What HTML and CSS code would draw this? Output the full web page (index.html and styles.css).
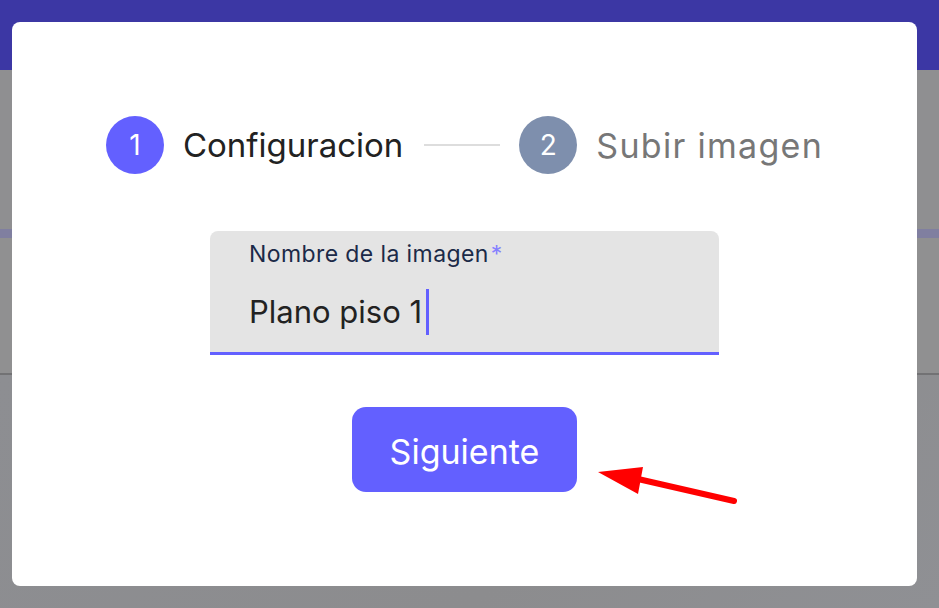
FILE: index.html
```html
<!DOCTYPE html>
<html lang="es">
<head>
<meta charset="utf-8">
<title>Subir imagen</title>
<link rel="stylesheet" href="styles.css">
</head>
<body>
<div class="page">
  <header class="topbar"></header>
  <div class="band band-a"></div>
  <div class="band band-stripe"></div>
  <div class="band band-b"></div>
  <div class="band band-line"></div>
  <div class="band band-c"></div>
</div>

<div class="modal">
  <div class="stepper">
    <div class="step active">
      <span class="circle">1</span>
      <span class="step-label">Configuracion</span>
    </div>
    <span class="connector"></span>
    <div class="step">
      <span class="circle">2</span>
      <span class="step-label">Subir imagen</span>
    </div>
  </div>

  <div class="field">
    <label class="field-label">Nombre de la imagen<span class="req">*</span></label>
    <div class="field-value">Plano piso 1<span class="caret"></span></div>
  </div>

  <button class="btn">Siguiente</button>

  <svg class="arrow" width="150" height="50" viewBox="0 0 150 50">
    <line x1="136" y1="40" x2="40" y2="18" stroke="#ff0000" stroke-width="6" stroke-linecap="round"/>
    <polygon points="0,11 45,6 40,33" fill="#ff0000"/>
  </svg>
</div>
</body>
</html>
```

FILE: styles.css
```css
* { box-sizing: border-box; }
html, body { margin: 0; padding: 0; }
body {
  width: 939px;
  height: 608px;
  overflow: hidden;
  font-family: Inter, "Noto Sans", sans-serif;
  position: relative;
  background: #8e8f93;
}
.page { display: flex; flex-direction: column; height: 608px; }
.topbar { height: 70px; background: #3c37a4; flex: none; }
.band { flex: none; }
.band-a { height: 159px; background: #8f8f91; }
.band-stripe { height: 9px; background: #807fa0; }
.band-b { height: 135px; background: #909091; }
.band-line { height: 2px; background: #727274; }
.band-c { flex: 1; background: linear-gradient(135deg, #8d8e92 0%, #8c8c8e 60%, #8f9094 100%); }

.modal {
  position: absolute;
  left: 12px;
  top: 22px;
  width: 905px;
  height: 564px;
  background: #ffffff;
  border-radius: 8px;
  display: flex;
  flex-direction: column;
  align-items: center;
  padding-top: 94px;
}

.stepper { display: flex; align-items: center; height: 58px; }
.step { display: flex; align-items: center; gap: 19px; }
.circle {
  width: 58px; height: 58px; border-radius: 50%;
  display: flex; align-items: center; justify-content: center;
  color: #ffffff; font-size: 28px; background: #7e8fad;
}
.step.active .circle { background: #6360ff; }
.step-label { font-size: 34px; color: #777777; letter-spacing: 1.3px; }
.step.active .step-label { color: #222222; letter-spacing: 0; font-size: 33px; }
.connector { width: 76px; height: 2px; background: #dddddd; margin: 0 19px 0 21px; }

.field {
  margin-top: 57px;
  width: 509px;
  height: 124px;
  background: #e4e4e4;
  border-radius: 8px 8px 0 0;
  border-bottom: 3px solid #6360ff;
  padding: 9px 39px 0;
}
.field-label { display: block; font-size: 23px; color: #1b2a48; line-height: 28px; letter-spacing: 0.4px; }
.req { color: #8580ff; margin-left: 2px; }
.field-value {
  margin-top: 21px;
  font-size: 31px; color: #222222; line-height: 46px;
  display: flex; align-items: center;
}
.caret { display: inline-block; width: 3px; height: 46px; background: #6360ff; margin-left: 4px; }

.btn {
  margin-top: 52px;
  width: 225px; height: 85px;
  border: none; border-radius: 14px;
  background: #6360ff; color: #ffffff;
  font-family: Inter, "Noto Sans", sans-serif;
  font-size: 34px;
  padding: 4px 0 0;
}

.arrow { position: absolute; left: 586px; top: 439px; }
```
